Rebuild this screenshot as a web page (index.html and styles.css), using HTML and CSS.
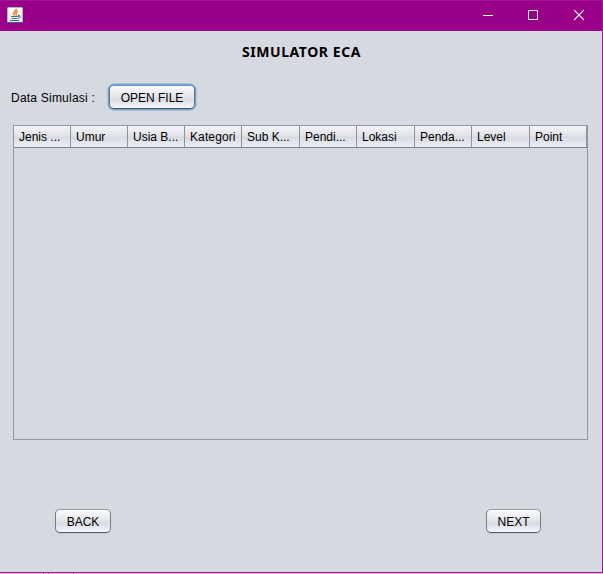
FILE: index.html
```
<!DOCTYPE html>
<html lang="id">
<head>
<meta charset="utf-8">
<title>Simulator ECA</title>
<link rel="stylesheet" href="styles.css">
</head>
<body>
<div class="window">
  <header class="titlebar">
    <svg class="app-icon" width="16" height="16" viewBox="0 0 16 16">
      <defs><linearGradient id="tile" x2="0" y2="1"><stop stop-color="#fff"/><stop offset="1" stop-color="#dfe5e8"/></linearGradient></defs>
      <rect x=".5" y=".5" width="15" height="15" rx="1" fill="url(#tile)" stroke="#a9bcc8"/>
      <path d="M1 15.500h14" stroke="#3f6078"/>
      <path d="M9.500 1.800C9.700 4 6.200 4.300 6.500 6.300c.1.900.9 1.300 1.100 2.200M11 4.200C8.500 5.200 8.300 6 9.200 7c.3.500.1.900-.3 1.500" fill="none" stroke="#ed8528" stroke-width="1.500"/>
      <path d="M4 9.500h8M5 11.500h5.500M3 13.500h9" fill="none" stroke="#42708f" stroke-width="1.200"/>
      <path d="M11 8.500h1.500q1.200.2.700 1.400-.4 1-2 1.500" fill="none" stroke="#42708f"/>
    </svg>
    <div class="controls">
      <svg width="46" height="29" viewBox="0 0 46 29"><path d="M19 14.500h10"/></svg>
      <svg width="46" height="29" viewBox="0 0 46 29"><path d="M18.500 9.500h9v9h-9z"/></svg>
      <svg width="46" height="29" viewBox="0 0 46 29"><path stroke-width="1.200" d="M18.200 9.200l9.600 9.600M27.800 9.200l-9.600 9.600"/></svg>
    </div>
  </header>
  <main class="content">
    <h1 class="title">SIMULATOR ECA</h1>
    <div class="source">
      <span class="label">Data Simulasi :</span>
      <button class="button button-open">OPEN FILE</button>
    </div>
    <div class="table">
      <div class="table-head">
        <span>Jenis ...</span><span>Umur</span><span>Usia B...</span><span class="tight">Kategori</span><span>Sub K...</span><span>Pendi...</span><span>Lokasi</span><span>Penda...</span><span>Level</span><span>Point</span>
      </div>
    </div>
    <div class="actions">
      <button class="button button-back">BACK</button>
      <button class="button button-next">NEXT</button>
    </div>
  </main>
</div>
<div class="backdrop"></div>
</body>
</html>
```
FILE: styles.css
```
* { box-sizing: border-box; }
body {
  margin: 0;
  height: 574px;
  overflow: hidden;
  background: #d6d9df;
  font: 12px/16px "Liberation Sans", Arial, sans-serif;
  color: #000;
}
.window {
  width: 603px;
  height: 573px;
  display: flex;
  flex-direction: column;
  background: #d6d9df;
  border-right: 1px solid #a3149a;
  border-bottom: 1px solid #a3149a;
}
.backdrop {
  height: 1px;
  background:
    linear-gradient(#8c7f8c, #8c7f8c) 43px 0 / 1px 1px no-repeat,
    linear-gradient(#8c7f8c, #8c7f8c) 48px 0 / 1px 1px no-repeat,
    linear-gradient(#8c7f8c, #8c7f8c) 73px 0 / 1px 1px no-repeat,
    #d2c4d2;
}
.titlebar {
  height: 31px;
  flex: none;
  display: flex;
  justify-content: space-between;
  background: #990087;
  border-top: 1px solid #a3149a;
}
.app-icon { margin: 6px 0 0 7px; }
.controls { display: flex; }
.controls svg { fill: none; stroke: #fff; }
.content { flex: 1; display: flex; flex-direction: column; }
.title {
  margin: 12px 0 0;
  padding-left: 1px;
  height: 18px;
  text-align: center;
  white-space: nowrap;
  font: bold 14px/18px "Noto Sans", sans-serif;
  letter-spacing: 0.57px;
}
.source {
  display: flex;
  align-items: center;
  height: 24px;
  margin: 24px 0 0 11px;
}
.label {
  width: 98px;
  padding-top: 2px;
  white-space: nowrap;
  letter-spacing: 0.22px;
}
.button {
  height: 24px;
  padding: 1px 0 0;
  border: 1px solid #777b83;
  border-color: #989ba1 #777b83 #555a62;
  border-radius: 5px;
  background: linear-gradient(#fbfbfc, #e5e7eb 45%, #d8dbe1 60%, #f5f7fc);
  box-shadow: 0 1px 1px #c3c7ce;
  font: inherit;
  color: #000;
}
.button-open {
  width: 86px;
  border-color: #6d94bb #647486 #4c5763;
  box-shadow: 0 0 0 1.400px #73a4d1;
}
.table {
  width: 575px;
  height: 315px;
  margin: 16px 0 0 13px;
  border: 1px solid #9297a1;
}
.table-head {
  display: grid;
  grid-template-columns: 57px 57px 57px 57px 58px 57px 58px 57px 58px 57px;
  height: 22px;
  border-bottom: 1px solid #7c818d;
  background: linear-gradient(#f3f4f6, #e1e3e8 45%, #d8dbe1 55%, #eceff6);
}
.table-head span {
  padding: 3px 0 0 5px;
  border-right: 1px solid #8e929b;
  white-space: nowrap;
  overflow: hidden;
}
.table-head .tight { letter-spacing: 0.12px; }
.actions {
  display: flex;
  justify-content: space-between;
  margin: 69px 61px 0 55px;
}
.button-back { width: 56px; }
.button-next { width: 55px; }
```
